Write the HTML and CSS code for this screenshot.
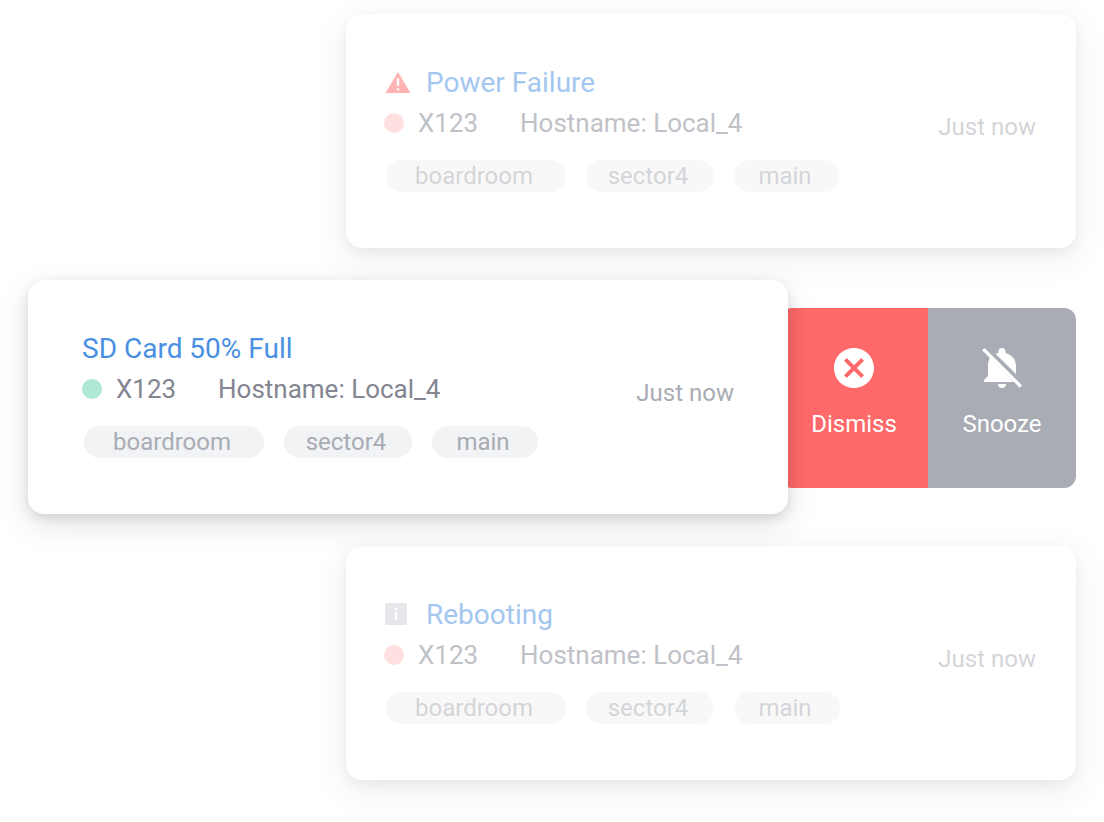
FILE: index.html
```html
<!DOCTYPE html>
<html lang="en">
<head>
    <meta charset="UTF-8">
    <meta name="viewport" content="width=device-width, initial-scale=1.0">
    <title>Alerts</title>
    <link rel="stylesheet" href="styles.css">
</head>
<body>
    <main class="alerts">
        <article class="card faded">
            <div class="card-body">
                <h2 class="title">
                    <svg class="title-icon" viewBox="0 1 28 28">
                        <path fill="#ff6969" fill-rule="evenodd" d="M14 4L26.500 25H1.500zM12.800 10.500V17.800H15.200V10.500zM12.800 20.200V22.600H15.200V20.200z"/>
                    </svg>
                    Power Failure
                </h2>
                <div class="device">
                    <span class="dot red"></span>
                    <span class="name">X123</span>
                    <span>Hostname: Local_4</span>
                </div>
                <div class="tags">
                    <span class="tag wide">boardroom</span>
                    <span class="tag medium">sector4</span>
                    <span class="tag">main</span>
                </div>
            </div>
            <span class="time">Just now</span>
        </article>

        <div class="swipe-row">
            <article class="card open">
                <div class="card-body">
                    <h2 class="title">SD Card 50% Full</h2>
                    <div class="device">
                        <span class="dot green"></span>
                        <span class="name">X123</span>
                        <span>Hostname: Local_4</span>
                    </div>
                    <div class="tags">
                        <span class="tag wide">boardroom</span>
                        <span class="tag medium">sector4</span>
                        <span class="tag">main</span>
                    </div>
                </div>
                <span class="time">Just now</span>
            </article>
            <div class="actions">
                <button type="button" class="action dismiss">
                    <svg class="action-icon" viewBox="0 0 24 24">
                        <path fill="#fff" d="M12 2C6.470 2 2 6.470 2 12s4.470 10 10 10 10-4.470 10-10S17.530 2 12 2zm5 13.590L15.590 17 12 13.410 8.410 17 7 15.590 10.590 12 7 8.410 8.410 7 12 10.590 15.590 7 17 8.410 13.410 12 17 15.590z"/>
                    </svg>
                    Dismiss
                </button>
                <button type="button" class="action snooze">
                    <svg class="action-icon" viewBox="0 0 48 48">
                        <g fill="#fff">
                            <path d="M6.600 3.900L44 41.300 41.600 43.700 4.200 6.300z"/>
                            <path d="M12 13.500C10.500 16 10 19 10 21.500V32L6 36V38H36z"/>
                            <path d="M17.500 9.800L38 30V22C38 15.500 34 10.800 27.500 9V7.500a3.500 3.500 0 0 0-7 0V8.700C19.500 9 18.500 9.300 17.500 9.800z"/>
                            <path d="M20 40h8a4 4 0 0 1-8 0z"/>
                        </g>
                    </svg>
                    Snooze
                </button>
            </div>
        </div>

        <article class="card faded">
            <div class="card-body">
                <h2 class="title">
                    <svg class="title-icon" viewBox="0 1 28 28">
                        <path fill="#cfd1d8" fill-rule="evenodd" d="M2.500 3H21.500Q23 3 23 4.500V23.500Q23 25 21.500 25H2.500Q1 25 1 23.500V4.500Q1 3 2.500 3zM10.800 8V10.300H13.200V8zM10.800 12.200V20H13.200V12.200z"/>
                    </svg>
                    Rebooting
                </h2>
                <div class="device">
                    <span class="dot red"></span>
                    <span class="name">X123</span>
                    <span>Hostname: Local_4</span>
                </div>
                <div class="tags">
                    <span class="tag wide">boardroom</span>
                    <span class="tag medium">sector4</span>
                    <span class="tag">main</span>
                </div>
            </div>
            <span class="time">Just now</span>
        </article>
    </main>
</body>
</html>
```
FILE: styles.css
```css
* {
    box-sizing: border-box;
}

body {
    margin: 0;
    background: #fff;
    font-family: Roboto, sans-serif;
}

.alerts {
    display: flex;
    flex-direction: column;
    gap: 32px;
    padding: 14px 28px 40px;
}

.card {
    display: flex;
    align-items: center;
    justify-content: space-between;
    padding: 48px 40px 56px 38px;
    background: #fff;
    border-radius: 16px;
    box-shadow: 0 10px 32px rgba(0, 0, 0, 0.12), 0 4px 12px rgba(0, 0, 0, 0.1);
}

.card.faded {
    margin-left: 318px;
    opacity: 0.5;
}

.card.open {
    position: relative;
    z-index: 1;
    flex: 1;
    padding-left: 54px;
    padding-right: 54px;
}

.title {
    display: flex;
    align-items: center;
    gap: 14px;
    margin: 0;
    color: #4a90e2;
    font-size: 28px;
    font-weight: 400;
    line-height: 42px;
}

.title-icon {
    width: 28px;
    height: 28px;
}

.device {
    display: flex;
    align-items: center;
    color: #838591;
    font-size: 26px;
    line-height: 38px;
}

.name {
    width: 102px;
}

.dot {
    width: 20px;
    height: 20px;
    margin-right: 14px;
    border-radius: 50%;
}

.dot.red {
    background: #ffc3c3;
}

.dot.green {
    background: #afe9d6;
}

.tags {
    display: flex;
    gap: 20px;
    margin: 18px 0 0 2px;
}

.tag {
    width: 106px;
    padding-right: 4px;
    border-radius: 16px;
    background: #f1f3f5;
    color: #a9acb4;
    font-size: 24px;
    line-height: 32px;
    text-align: center;
}

.faded .tag {
    background: #f3f3f3;
}

.tag.medium {
    width: 128px;
}

.tag.wide {
    width: 180px;
}

.time {
    color: #a9acb4;
    font-size: 24px;
}

.swipe-row {
    display: flex;
    align-items: flex-start;
}

/* buttons start slightly underneath the open card */
.actions {
    display: flex;
    margin: 28px 0 0 -8px;
    border-radius: 12px;
    overflow: hidden;
}

.action {
    display: flex;
    flex-direction: column;
    align-items: center;
    gap: 16px;
    width: 148px;
    height: 180px;
    padding: 36px 0 0;
    border: 0;
    color: #fff;
    font-family: inherit;
    font-size: 24px;
    line-height: 32px;
    cursor: pointer;
}

.dismiss {
    background: #ff6969;
}

.snooze {
    background: #a9acb4;
}

.action-icon {
    width: 48px;
    height: 48px;
}
```
